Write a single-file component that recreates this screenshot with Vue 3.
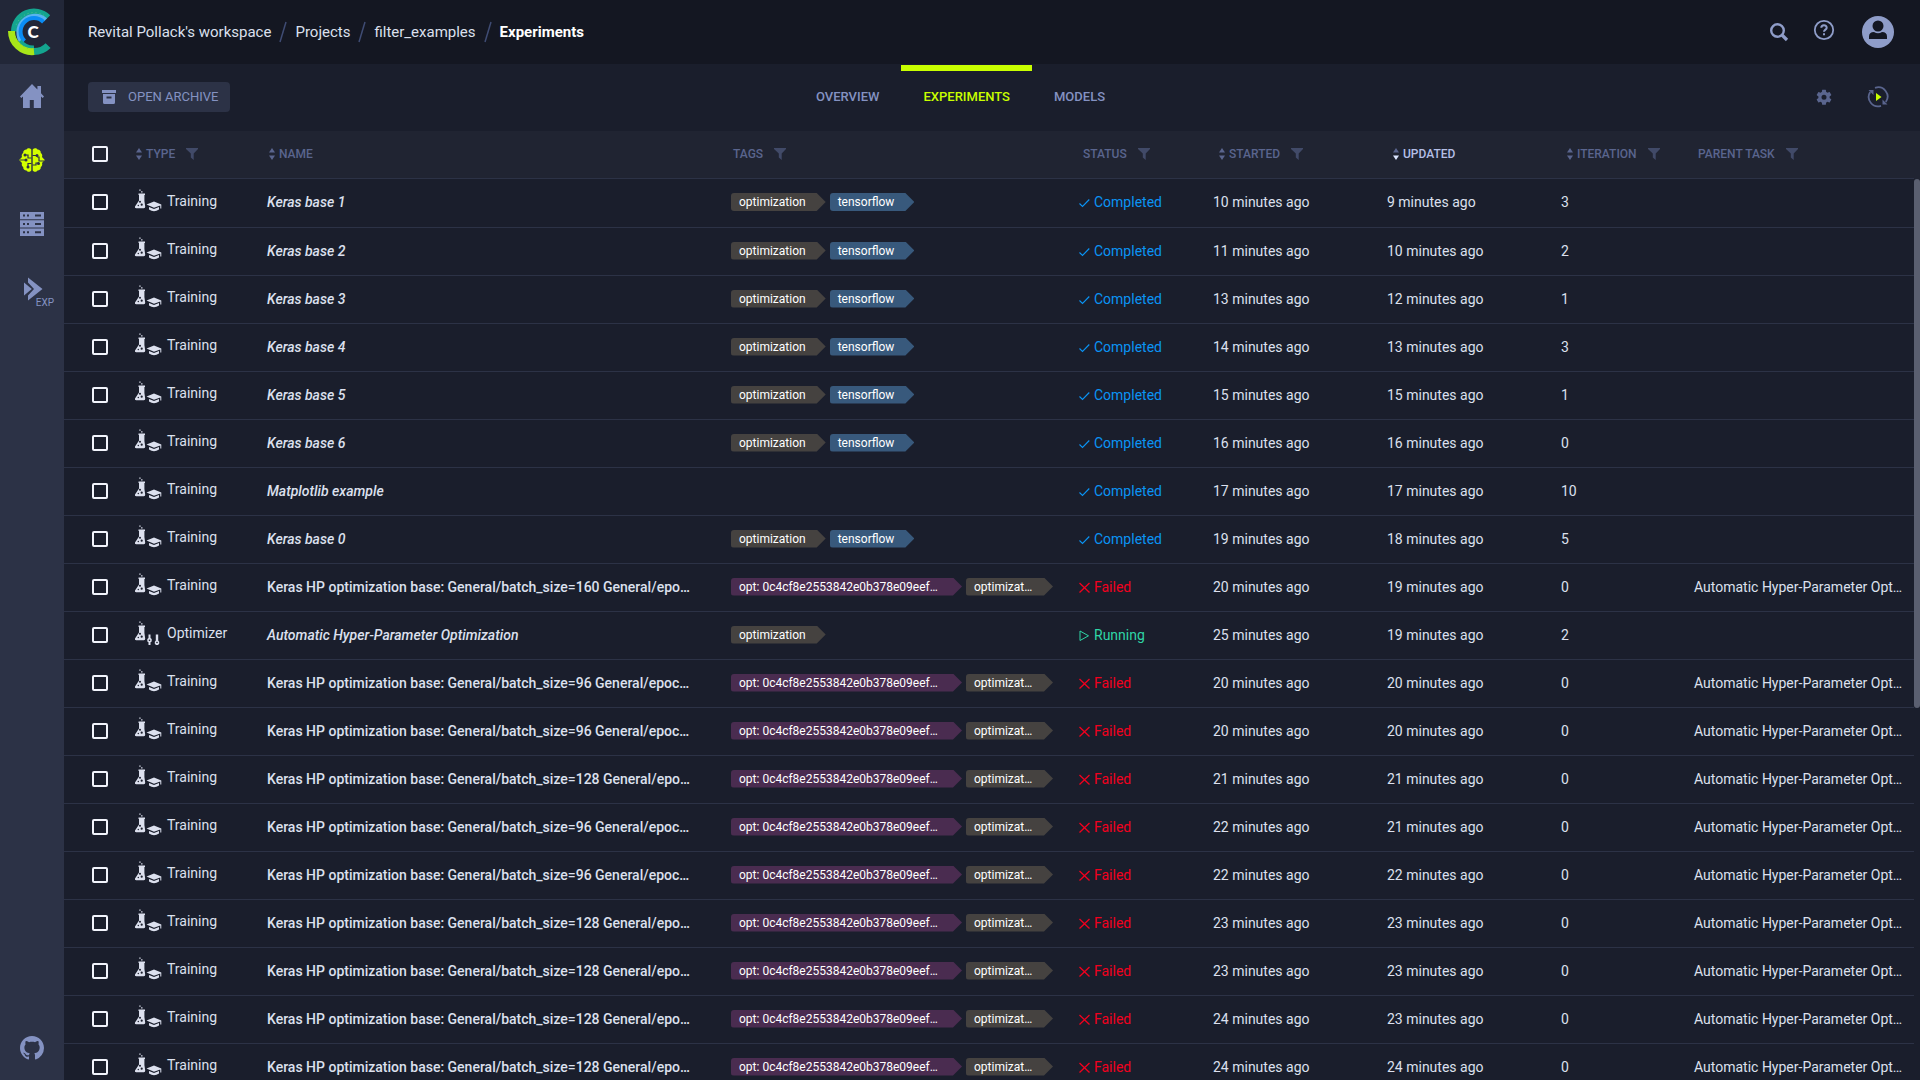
<script setup>
const navItems = ['home', 'brain', 'servers']

const crumbs = ["Revital Pollack's workspace", 'Projects', 'filter_examples']

const columns = [
  { key: 'type', label: 'Type', sort: true, filter: true },
  { key: 'name', label: 'Name', sort: true },
  { key: 'tags', label: 'Tags', filter: true },
  { key: 'status', label: 'Status', filter: true, inset: true },
  { key: 'started', label: 'Started', sort: true, filter: true, inset: true },
  { key: 'updated', label: 'Updated', sort: true, active: true, inset: true },
  { key: 'iteration', label: 'Iteration', sort: true, filter: true, inset: true },
  { key: 'parent', label: 'Parent task', filter: true, inset: true },
]

const baseTags = [
  { text: 'optimization', kind: 'brown' },
  { text: 'tensorflow', kind: 'blue' },
]
const childTags = [
  { text: 'opt: 0c4cf8e2553842e0b378e09eef…', kind: 'purple' },
  { text: 'optimizat…', kind: 'brown short' },
]

const completed = (name, started, updated, iteration, tags = baseTags) => ({
  type: 'Training', name, tags, italic: true, status: 'Completed', started, updated, iteration, parent: '',
})
const failed = (batch, tail, started, updated) => ({
  type: 'Training',
  name: `Keras HP optimization base: General/batch_size=${batch} General/${tail}…`,
  tags: childTags,
  status: 'Failed',
  started,
  updated,
  iteration: 0,
  parent: 'Automatic Hyper-Parameter Opt…',
})

const rows = [
  completed('Keras base 1', 10, 9, 3),
  completed('Keras base 2', 11, 10, 2),
  completed('Keras base 3', 13, 12, 1),
  completed('Keras base 4', 14, 13, 3),
  completed('Keras base 5', 15, 15, 1),
  completed('Keras base 6', 16, 16, 0),
  completed('Matplotlib example', 17, 17, 10, []),
  completed('Keras base 0', 19, 18, 5),
  failed(160, 'epo', 20, 19),
  {
    type: 'Optimizer',
    name: 'Automatic Hyper-Parameter Optimization',
    italic: true,
    tags: [{ text: 'optimization', kind: 'brown' }],
    status: 'Running',
    started: 25,
    updated: 19,
    iteration: 2,
    parent: '',
  },
  failed(96, 'epoc', 20, 20),
  failed(96, 'epoc', 20, 20),
  failed(128, 'epo', 21, 21),
  failed(96, 'epoc', 22, 21),
  failed(96, 'epoc', 22, 22),
  failed(128, 'epo', 23, 23),
  failed(128, 'epo', 23, 23),
  failed(128, 'epo', 24, 23),
  failed(128, 'epo', 24, 24),
]
</script>

<template>
  <div class="app">
    <aside class="sidebar">
      <a class="logo" href="#" aria-label="Home page">
        <svg width="64" height="64" viewBox="0 0 64 64" fill="none">
          <path d="M48.1 17.4A20 20 0 0 0 14 31.5" stroke="#14a58f" stroke-width="6" />
          <path d="M45.7 19.8A16.6 16.6 0 0 0 22.3 43.2" stroke="#58b4ee" stroke-width="4" />
          <path d="M43.5 22A13.4 13.4 0 1 0 24.5 41" stroke="#0a8cf5" stroke-width="4" />
          <path d="M48.1 45.6A20 20 0 0 1 34 51.5 20 20 0 0 1 20 45.6" stroke="#14a58f" stroke-width="7" />
          <path d="M34 47.5A17 17 0 0 1 20 41" stroke="#14a58f" stroke-width="4" />
          <path d="M34 51.6A20.6 20.6 0 0 1 11.5 31" stroke="#a8e619" stroke-width="7" />
          <path d="M28 48.5A20 20 0 0 1 14.6 35" stroke="#7ad03a" stroke-width="1" stroke-dasharray="1 3" />
          <path d="M44 15.500A19 19 0 0 0 15.500 27" stroke="#58c48c" stroke-width="1" stroke-dasharray="1 3" />
          <text x="33" y="38" class="logo-letter" text-anchor="middle">C</text>
        </svg>
      </a>
      <nav class="side-nav">
        <a v-for="item in navItems" :key="item" href="#" :aria-label="item" :class="['side-link', { active: item === 'brain' }]">
          <svg v-if="item === 'home'" width="28" height="28" viewBox="0 0 28 28" fill="currentColor">
            <path d="M14 2 2 14.5 3.3 16 5 14.4V26h6.8v-8h4v8H23V14.4l1.7 1.6 1.3-1.5-3-3.2V4h-3.6v3.6z" />
          </svg>
          <svg v-else-if="item === 'brain'" width="28" height="28" viewBox="0 0 28 28">
            <path
              fill="currentColor"
              d="M13.300 3.500C12 1.800 9.500 1.800 8.500 3.500 6.500 3.500 5 5 5.200 7 3.800 8 3.400 9.500 4 11L1.200 14 4 17C3.400 18.500 3.800 20 5.200 21 5 23 6.500 24.500 8.500 24.500 9.500 26.200 12 26.200 13.300 24.500zM14.700 3.500C16 1.800 18.500 1.800 19.500 3.500 21.500 3.500 23 5 22.800 7 24.200 8 24.600 9.500 24 11L26.800 14 24 17C24.600 18.500 24.200 20 22.800 21 23 23 21.500 24.500 19.500 24.500 18.500 26.200 16 26.200 14.700 24.500z"
            />
            <g fill="none" stroke="#2c3246" stroke-width="1.200">
              <path d="M13.500 12H10V9H7M2 14h6M13.500 17.500H10V21M14.500 9.500H19M14.500 19H18v-2h3M26 15h-5v-4h-2" />
            </g>
            <g fill="#2c3246">
              <circle cx="7" cy="9" r="1.500" /><circle cx="8" cy="14" r="1.500" /><circle cx="10" cy="21" r="1.500" />
              <circle cx="19" cy="9.500" r="1.500" /><circle cx="20.500" cy="17.500" r="1.500" />
            </g>
          </svg>
          <svg v-else width="28" height="28" viewBox="0 0 28 28">
            <path fill="currentColor" d="M2 2h24v7.300H2zM2 10.300h24v7.300H2zM2 18.600h24V26H2z" />
            <path stroke="#2c3246" stroke-width="2" stroke-dasharray="2 2 2 6 6 30" d="M5 5.600h19M5 14h19M5 22.300h19" />
          </svg>
        </a>
        <a class="side-link exp" href="#">
          <svg width="20" height="24" viewBox="0 0 20 24" fill="currentColor">
            <path d="M5 .5v5L11 12l-6 6.500v5L19.500 12z" />
            <path d="M1 5.500v13L8.800 12z" />
          </svg>
          <span>EXP</span>
        </a>
      </nav>
      <a class="github" href="#" aria-label="GitHub">
        <svg width="24" height="24" viewBox="0 0 16 16" fill="currentColor">
          <path d="M8 0C3.580 0 0 3.580 0 8c0 3.540 2.290 6.530 5.470 7.590.4.070.55-.17.55-.38 0-.19-.01-.82-.01-1.490-2.010.37-2.530-.49-2.690-.94-.09-.23-.48-.94-.82-1.130-.28-.15-.68-.52-.01-.53.63-.01 1.080.58 1.230.82.72 1.210 1.870.87 2.330.66.07-.52.28-.87.51-1.070-1.780-.2-3.640-.89-3.640-3.950 0-.87.31-1.590.82-2.150-.08-.2-.36-1.020.08-2.120 0 0 .67-.21 2.200.82.64-.18 1.320-.27 2-.27s1.360.09 2 .27c1.530-1.040 2.200-.82 2.200-.82.44 1.100.16 1.920.08 2.120.51.56.82 1.270.82 2.150 0 3.070-1.870 3.750-3.650 3.950.29.25.54.73.54 1.480 0 1.070-.01 1.930-.01 2.200 0 .21.15.46.55.38A8.010 8.010 0 0 0 16 8c0-4.420-3.580-8-8-8" />
        </svg>
      </a>
    </aside>

    <div class="page">
      <header class="topbar">
        <nav class="crumbs" aria-label="Breadcrumb">
          <template v-for="crumb in crumbs" :key="crumb">
            <a href="#">{{ crumb }}</a>
            <svg class="slash" width="8" height="22" viewBox="0 0 8 22"><path d="M7 1 1 21" stroke="#3f4c74" stroke-width="1.500" /></svg>
          </template>
          <strong>Experiments</strong>
        </nav>
        <div class="top-actions">
          <button type="button" aria-label="Search">
            <svg width="20" height="20" viewBox="0 0 20 20" fill="none" stroke="currentColor">
              <circle cx="8.500" cy="8.500" r="6.300" stroke-width="2.400" /><path d="m13 13 5 5" stroke-width="3.200" />
            </svg>
          </button>
          <button type="button" class="help" aria-label="Help">
            <svg width="22" height="22" viewBox="0 0 22 22" fill="none" stroke="currentColor" stroke-width="1.800">
              <circle cx="11" cy="11" r="9.200" />
              <path d="M8.300 8.800C8.300 5.500 13.700 5.500 13.700 8.700 13.700 10.600 11 10.700 11 12.800" stroke-width="2" /><path d="M11 14.200v2" stroke-width="2" />
            </svg>
          </button>
          <button type="button" aria-label="Account">
            <svg width="32" height="32" viewBox="0 0 32 32">
              <circle cx="16" cy="16" r="16" fill="currentColor" />
              <circle cx="16" cy="10" r="5.500" fill="#141722" />
              <path fill="#141722" d="M7 23v-2.500Q7 16 12 16q4 2.500 8 0 5 0 5 4.500V23z" />
            </svg>
          </button>
        </div>
      </header>

      <div class="toolbar">
        <div class="toolbar-left">
          <button type="button" class="archive">
            <svg width="14" height="14" viewBox="0 0 14 14" fill="currentColor">
              <path d="M0 0h14v3H0z" /><path fill-rule="evenodd" d="M1 4h12v8.500q0 1.500-1.500 1.500h-9Q1 14 1 12.500zm3.500 2.500v2h5v-2z" />
            </svg>
            OPEN ARCHIVE
          </button>
        </div>
        <nav class="tabs">
          <a href="#">OVERVIEW</a>
          <a href="#" class="current" aria-current="page">EXPERIMENTS</a>
          <a href="#">MODELS</a>
        </nav>
        <div class="toolbar-right">
          <button type="button" aria-label="Settings">
            <svg width="20" height="20" viewBox="1 1 22 22" fill="currentColor">
              <path d="M19.140 12.940c.04-.3.060-.61.060-.94 0-.32-.02-.64-.07-.94l2.030-1.580a.49.49 0 0 0 .12-.61l-1.920-3.320a.488.488 0 0 0-.59-.22l-2.390.96c-.5-.38-1.030-.7-1.620-.94l-.36-2.540a.484.484 0 0 0-.48-.41h-3.840c-.24 0-.43.17-.47.41l-.36 2.540c-.59.24-1.130.57-1.620.94l-2.390-.96a.48.48 0 0 0-.59.22L2.740 8.870c-.12.210-.08.47.12.61l2.030 1.580c-.05.3-.09.63-.09.94s.02.640.07.940l-2.030 1.580a.49.49 0 0 0-.12.61l1.920 3.320c.12.220.37.290.59.220l2.390-.96c.5.380 1.030.7 1.620.94l.36 2.540c.05.240.24.410.48.410h3.840c.24 0 .44-.17.47-.41l.36-2.540c.59-.24 1.130-.56 1.620-.94l2.390.96c.22.080.47 0 .59-.22l1.920-3.320a.48.48 0 0 0-.12-.61zM12 15.200A3.200 3.200 0 1 1 12 8.800a3.200 3.200 0 0 1 0 6.400" transform="matrix(.86 0 0 .86 1.680 2)" />
            </svg>
          </button>
          <button type="button" aria-label="Auto refresh">
            <svg width="22" height="22" viewBox="0 0 22 22" fill="none">
              <path d="M8 1.900A9.300 9.300 0 0 1 18.800 16M14 19.800A9.300 9.300 0 0 1 3.200 6" stroke="#5a658e" stroke-width="1.800" />
              <path d="M1.500 4h5v5zM20.500 18.500h-5v-5z" fill="#5a658e" />
              <path d="M9 7v8l5.500-4z" fill="#c9ff00" />
            </svg>
          </button>
        </div>
      </div>

      <main class="content">
        <table>
          <colgroup>
            <col class="w-check" />
            <col v-for="column in columns" :key="column.key" :class="`w-${column.key}`" />
          </colgroup>
          <thead>
            <tr>
              <th class="check"><input type="checkbox" aria-label="Select all" /></th>
              <th
                v-for="column in columns"
                :key="column.key"
                :class="{ active: column.active, inset: column.inset, sortable: column.sort }"
              >
                <div class="head">
                  <svg v-if="column.sort" class="sort" width="6" height="12" viewBox="0 0 6 12">
                    <path class="up" d="M3 0 6 4.500H0z" /><path class="down" d="M0 7.500h6L3 12z" />
                  </svg>
                  <span>{{ column.label }}</span>
                  <svg v-if="column.filter" class="filter" width="12" height="12" viewBox="0 0 12 12">
                    <path d="M0 0h12v1L7.700 5.500V12L4.800 9.500v-4L0 1z" />
                  </svg>
                </div>
              </th>
            </tr>
          </thead>
          <tbody>
            <tr v-for="(row, index) in rows" :key="index">
              <td class="check"><input type="checkbox" :aria-label="`Select ${row.name}`" /></td>
              <td>
                <div class="type">
                  <svg width="28" height="24" viewBox="0 0 28 24" fill="currentColor">
                    <path d="M5.300.5h1.300v1.300H5.300zM7.100 2.200h1.400v1.400H7.100zM4.500 4.500h6.500v1.500h-.6v6l.8 5.500q.2 1.700-1.400 1.700H2.200Q.4 19.200 1 17.500L5 11.500V6h-.5z" />
                    <g fill="#1a1e2c"><circle cx="6" cy="12.800" r="1" /><circle cx="7.700" cy="15.700" r="1.100" /><circle cx="4.300" cy="16.500" r=".7" /></g>
                    <path v-if="row.type === 'Training'" d="m20 12.500 7.300 3v4h-1v-3l-6.300 2.300-7.500-3.200zM15 18l5 2 5-2v2.600q-5 3.400-10 0z" />
                    <g v-else>
                      <path d="M14.500 13.500h2V17l1.200 1v2.500l-1.200.8v3h-2v-3l-1.200-.8V18l1.200-1z" />
                      <path d="M21.800 13.500h2.400v6l1 1.200v2L24 24h-2l-1.200-1.300v-2l1-1.200z" />
                      <circle cx="15.500" cy="19.200" r=".8" fill="#1a1e2c" /><circle cx="23" cy="21.500" r=".8" fill="#1a1e2c" />
                    </g>
                  </svg>
                  <span>{{ row.type }}</span>
                </div>
              </td>
              <td :class="['name', { italic: row.italic }]">{{ row.name }}</td>
              <td>
                <div class="tags">
                  <span v-for="tag in row.tags" :key="tag.text" :class="['tag', tag.kind]">{{ tag.text }}</span>
                </div>
              </td>
              <td>
                <div :class="['status', row.status.toLowerCase()]">
                  <svg width="11" height="12" viewBox="0 0 11 12" fill="none" stroke="currentColor" stroke-width="1.300">
                    <path v-if="row.status === 'Completed'" d="m.5 7.500 3 3L10.300 3.500" stroke-width="1.100" />
                    <path v-else-if="row.status === 'Failed'" d="m.5 2 10 9.500m0-9.500-10 9.500" />
                    <path v-else d="M1 2v9.500l8.500-4.700z" stroke-width="1" />
                  </svg>
                  <span>{{ row.status }}</span>
                </div>
              </td>
              <td>{{ row.started }} minutes ago</td>
              <td>{{ row.updated }} minutes ago</td>
              <td>{{ row.iteration }}</td>
              <td>{{ row.parent }}</td>
            </tr>
          </tbody>
        </table>
        <div class="rail"><div class="thumb"></div></div>
      </main>
    </div>
  </div>
</template>

<style>
body {
  background: #1a1e2c;
}
</style>

<style scoped>
.app {
  display: flex;
  height: 100vh;
  overflow: hidden;
  background: #1a1e2c;
  color: #dce0ee;
  font: 14px/20px Roboto, sans-serif;
}
a {
  color: inherit;
  text-decoration: none;
}
button {
  display: flex;
  align-items: center;
  padding: 0;
  border: 0;
  background: none;
  color: inherit;
  font: inherit;
}
svg {
  display: block;
  flex: none;
}

.sidebar {
  display: flex;
  flex: none;
  flex-direction: column;
  width: 64px;
  background: #2c3246;
  color: #8492c2;
}
.logo {
  height: 64px;
  background: #222738;
}
.logo-letter {
  fill: #fff;
  font: 900 17px Lato, sans-serif;
}
.side-nav {
  flex: 1;
}
.side-link {
  display: flex;
  align-items: center;
  justify-content: center;
  box-sizing: border-box;
  height: 64px;
}
.side-link.active {
  color: #d3ff00;
}
.exp {
  flex-direction: column;
  padding-top: 10px;
}
.exp svg {
  margin-left: 2px;
}
.exp span {
  margin: -4px 0 0 26px;
  font-size: 10px;
  line-height: 12px;
}
.github {
  display: flex;
  justify-content: center;
  padding-bottom: 20px;
}

.page {
  display: flex;
  flex: 1;
  flex-direction: column;
  min-width: 0;
}
.topbar {
  display: flex;
  flex: none;
  align-items: center;
  justify-content: space-between;
  height: 64px;
  padding: 0 26px 0 24px;
  background: #141722;
}
.crumbs {
  display: flex;
  align-items: center;
  gap: 8px;
  font-size: 15px;
}
.crumbs strong {
  color: #fff;
  font-weight: 700;
}
.top-actions {
  display: flex;
  align-items: center;
  color: #8f9dc9;
}
.help {
  margin: 0 27px 4px 24px;
}

.toolbar {
  display: flex;
  flex: none;
  height: 67px;
  padding: 0 24px;
}
.toolbar-left,
.toolbar-right {
  display: flex;
  align-items: center;
  padding-bottom: 2px;
}
.toolbar-left {
  flex: 1 1 0;
}
.archive {
  gap: 12px;
  height: 30px;
  padding: 0 12px 0 14px;
  border-radius: 4px;
  background: #2c3246;
  color: #8492c2;
  font-size: 13px;
}
.tabs {
  display: flex;
  color: #8492c2;
  font-size: 13px;
  font-weight: 500;
}
.tabs a {
  margin-top: 1px;
  padding: 16px 22px 0;
  border-top: 6px solid transparent;
}
.tabs .current {
  border-color: #c9ff00;
  color: #c9ff00;
}
.toolbar-right {
  flex: 1 1 56px;
  justify-content: flex-end;
  gap: 33px;
  padding-right: 7px;
  color: #5a658e;
}

.content {
  display: flex;
  flex: 1;
  align-items: flex-start;
  min-height: 0;
  overflow: hidden;
}
table {
  flex: 1;
  width: 100%;
  min-width: 0;
  table-layout: fixed;
  border-collapse: separate;
  border-spacing: 0;
}
.w-check { width: 60px; }
.w-type { width: 133px; }
.w-tags { width: 348px; }
.w-status { width: 134px; }
.w-started,
.w-updated { width: 174px; }
.w-iteration { width: 133px; }
.w-parent { width: 230px; }

th,
td {
  box-sizing: border-box;
  height: 48px;
  padding: 0 0 2px 10px;
  overflow: hidden;
  border-bottom: 1px solid #2c3246;
  text-align: left;
  white-space: nowrap;
}
th {
  background: #202432;
  color: #5a658e;
  font-size: 12px;
  font-weight: 500;
  text-transform: uppercase;
}
tbody tr:first-child td {
  height: 49px;
}
.check {
  padding-left: 28px;
}
.head {
  display: flex;
  align-items: center;
  padding-left: 2px;
}
.inset .head {
  padding-left: 4px;
}
.inset.sortable .head {
  padding-left: 6px;
}
.head span {
  margin-left: 4px;
}
.head span:first-child {
  margin-left: 0;
}
.sort {
  fill: #5a658e;
}
.filter {
  margin-left: 11px;
  fill: #414a68;
}
.active {
  color: #b4bfe6;
}
.active .down {
  fill: #dce6ff;
}
input[type='checkbox'] {
  display: block;
  box-sizing: border-box;
  width: 16px;
  height: 16px;
  margin: 0;
  border: 2px solid #f2f4fc;
  border-radius: 2px;
  appearance: none;
}
.type {
  display: flex;
  align-items: center;
  gap: 5px;
  padding-bottom: 3px;
}
.name {
  font-weight: 500;
}
.name.italic {
  font-style: italic;
}
.tags {
  display: flex;
  gap: 4px;
}
.tag {
  box-sizing: border-box;
  height: 18px;
  padding: 0 20px 0 8px;
  border-radius: 3px 0 0 3px;
  clip-path: polygon(0 0, calc(100% - 9px) 0, 100% 50%, calc(100% - 9px) 100%, 0 100%);
  color: #fff;
  font-size: 12px;
  line-height: 18px;
}
.brown { background: #454240; }
.blue { background: #38597c; }
.purple {
  width: 231px;
  background: #4a2c50;
}
.short {
  width: 87px;
}
.status {
  display: flex;
  align-items: center;
  gap: 4px;
}
.completed { color: #0a94f5; }
.failed { color: #f2001e; }
.running { color: #2fd6a6; }

.rail {
  box-sizing: border-box;
  flex: none;
  align-self: stretch;
  width: 6px;
  border-top: 48px solid #202432;
}
.thumb {
  height: 58.7%;
  border-radius: 3px;
  background: #5a5f70;
}
</style>
